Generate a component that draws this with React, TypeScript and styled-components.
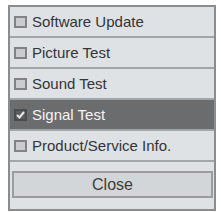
import React from "react";
import styled, { createGlobalStyle } from "styled-components";

const Global = createGlobalStyle`
  html, body { margin: 0; padding: 0; background: #ffffff; }
  body { font-family: "Liberation Sans", Arial, sans-serif; }
`;

const Page = styled.div`
  padding: 5px 0 0 8px;
`;

const Panel = styled.div`
  width: 208px;
  height: 206px;
  box-sizing: border-box;
  border: 2px solid #8a8c8e;
  background: #dfe2e4;
  display: flex;
  flex-direction: column;
`;

const List = styled.div`
  display: flex;
  flex-direction: column;
`;

const Row = styled.div<{ $selected?: boolean }>`
  height: 29px;
  display: flex;
  align-items: center;
  gap: 5px;
  padding-left: 4px;
  border-bottom: 2px solid #a3a6a8;
  background: ${(p) => (p.$selected ? "#6a6c6e" : "transparent")};
  color: ${(p) => (p.$selected ? "#f4f4f4" : "#333537")};
  font-size: 15px;
  white-space: nowrap;
`;

const Box = styled.span<{ $selected?: boolean }>`
  width: 13px;
  height: 12px;
  box-sizing: border-box;
  border: 2px solid ${(p) => (p.$selected ? "#4a4c4e" : "#808284")};
  background: ${(p) => (p.$selected ? "#5a5c5e" : "#caccce")};
  display: flex;
  align-items: center;
  justify-content: center;
  flex: none;
`;

const Footer = styled.div`
  flex: 1;
  display: flex;
  flex-direction: column;
  padding: 9px 1px 0 2px;
`;

const CloseButton = styled.div`
  height: 27px;
  box-sizing: border-box;
  border: 2px solid #9a9c9e;
  background: #d3d6d8;
  color: #3a3c3e;
  font-size: 16px;
  display: flex;
  align-items: center;
  justify-content: center;
`;

const items = [
  "Software Update",
  "Picture Test",
  "Sound Test",
  "Signal Test",
  "Product/Service Info.",
];

export default function App() {
  return (
    <>
      <Global />
      <Page>
        <Panel>
          <List>
            {items.map((t, i) => {
              const sel = i === 3;
              return (
                <Row key={t} $selected={sel}>
                  <Box $selected={sel}>
                    {sel && (
                      <svg width="9" height="8" viewBox="0 0 9 8">
                        <path d="M1 4 L3.5 6.5 L8 1" stroke="#e8e8e8" strokeWidth="2" fill="none" />
                      </svg>
                    )}
                  </Box>
                  {t}
                </Row>
              );
            })}
          </List>
          <Footer>
            <CloseButton>Close</CloseButton>
          </Footer>
        </Panel>
      </Page>
    </>
  );
}
